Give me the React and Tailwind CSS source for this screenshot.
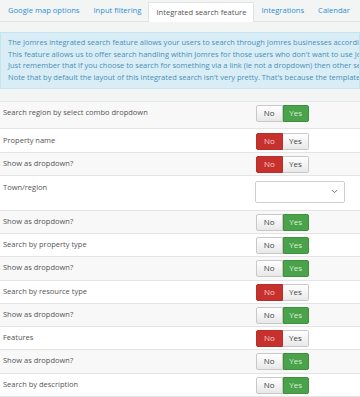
import { ChevronDown } from "lucide-react";

const tabs = [
  { label: "Google map options", active: false },
  { label: "Input filtering", active: false },
  { label: "Integrated search feature", active: true },
  { label: "Integrations", active: false },
  { label: "Calendar", active: false },
];

const rows = [
  { label: "Search region by select combo dropdown", value: true, h: "h-[27px]", pt: "pt-[3px]" },
  { label: "Property name", value: false, h: "h-[24px]", pt: "pt-[4px]" },
  { label: "Show as dropdown?", value: false, h: "h-[23px]", pt: "pt-[3px]" },
  { label: "Town/region", select: true, h: "h-[35px]", pt: "pt-[4px]" },
  { label: "Show as dropdown?", value: true, h: "h-[23px]", pt: "pt-[3px]" },
  { label: "Search by property type", value: true, h: "h-[23px]", pt: "pt-[3px]" },
  { label: "Show as dropdown?", value: true, h: "h-[24px]", pt: "pt-[3px]" },
  { label: "Search by resource type", value: false, h: "h-[23px]", pt: "pt-[3px]" },
  { label: "Show as dropdown?", value: true, h: "h-[23px]", pt: "pt-[3px]" },
  { label: "Features", value: false, h: "h-[23px]", pt: "pt-[3px]" },
  { label: "Show as dropdown?", value: true, h: "h-[24px]", pt: "pt-[3px]" },
  { label: "Search by description", value: true, h: "h-[23px]", pt: "pt-[3px]" },
];

function Toggle({ value }) {
  return (
    <div className="flex h-[17px] w-[53px] text-[8px] leading-none">
      {/* No */}
      <span
        className={
          value
            ? "flex flex-1 items-center justify-center rounded-l-[2px] border border-[#c8c8c8] bg-gradient-to-b from-white to-[#e8e8e8] text-[#444]"
            : "flex flex-1 items-center justify-center rounded-l-[2px] border border-[#b3302b] bg-[#c7312d] text-[#f3d0cf]"
        }
      >
        No
      </span>
      {/* Yes */}
      <span
        className={
          value
            ? "flex flex-1 items-center justify-center rounded-r-[2px] border border-[#3f8f3f] bg-[#4aa34a] text-[#d9efd9]"
            : "flex flex-1 items-center justify-center rounded-r-[2px] border border-l-0 border-[#c8c8c8] bg-gradient-to-b from-white to-[#e8e8e8] text-[#444]"
        }
      >
        Yes
      </span>
    </div>
  );
}

export default function App() {
  return (
    <div className="w-[360px] h-[397px] overflow-hidden bg-white font-['Open_Sans',sans-serif]">
      {/* top grey area: tabs + info */}
      <div className="bg-[#f3f4f4] pb-[12px]">
        <ul className="flex h-[22px] items-end border-b border-[#e2e2e2] pl-[1px] text-[7.6px] whitespace-nowrap">
          {tabs.map((t) =>
            t.active ? (
              <li
                key={t.label}
                className="-mb-px flex h-[20px] items-center border border-b-0 border-[#e2e2e2] bg-white px-[7px] text-[#555]"
              >
                {t.label}
              </li>
            ) : (
              <li key={t.label} className="flex h-[20px] items-center px-[7px] text-[#2d8fd0]">
                {t.label}
              </li>
            )
          )}
        </ul>

        <div className="mt-[10px] overflow-hidden border border-[#c6e4ef] bg-[#d9edf7] px-[7px] py-[4px] text-[7.5px] leading-[11.7px] text-[#4b8fb5] whitespace-nowrap">
          <p>The Jomres integrated search feature allows your users to search through Jomres businesses according to their criteria.</p>
          <p>This feature allows us to offer search handling within Jomres for those users who don't want to use Jomres' own search.</p>
          <p>Just remember that if you choose to search for something via a link (ie not a dropdown) then other search options are hidden.</p>
          <p>Note that by default the layout of this integrated search isn't very pretty. That's because the template is designed to be edited.</p>
        </div>
      </div>

      {/* settings rows */}
      <div className="border-t border-[#e6e6e6]">
        {rows.map((r, i) => (
          <div
            key={i}
            className={`flex ${r.h} ${r.pt} border-b border-[#e4e4e4] ${i % 2 === 0 ? "bg-[#f8f8f8]" : "bg-white"}`}
          >
            <div className="w-[255px] pl-[3px] text-[7.5px] leading-[15px] text-[#555]">{r.label}</div>
            <div className="flex-1">
              {r.select ? (
                <div className="mt-[1px] flex h-[22px] w-[90px] items-center justify-end rounded-[2px] border border-[#cfcfcf] bg-white pr-[5px]">
                  <ChevronDown size={9} strokeWidth={2.5} className="text-[#666]" />
                </div>
              ) : (
                <div className="ml-[1px]">
                  <Toggle value={r.value} />
                </div>
              )}
            </div>
          </div>
        ))}
      </div>
    </div>
  );
}
